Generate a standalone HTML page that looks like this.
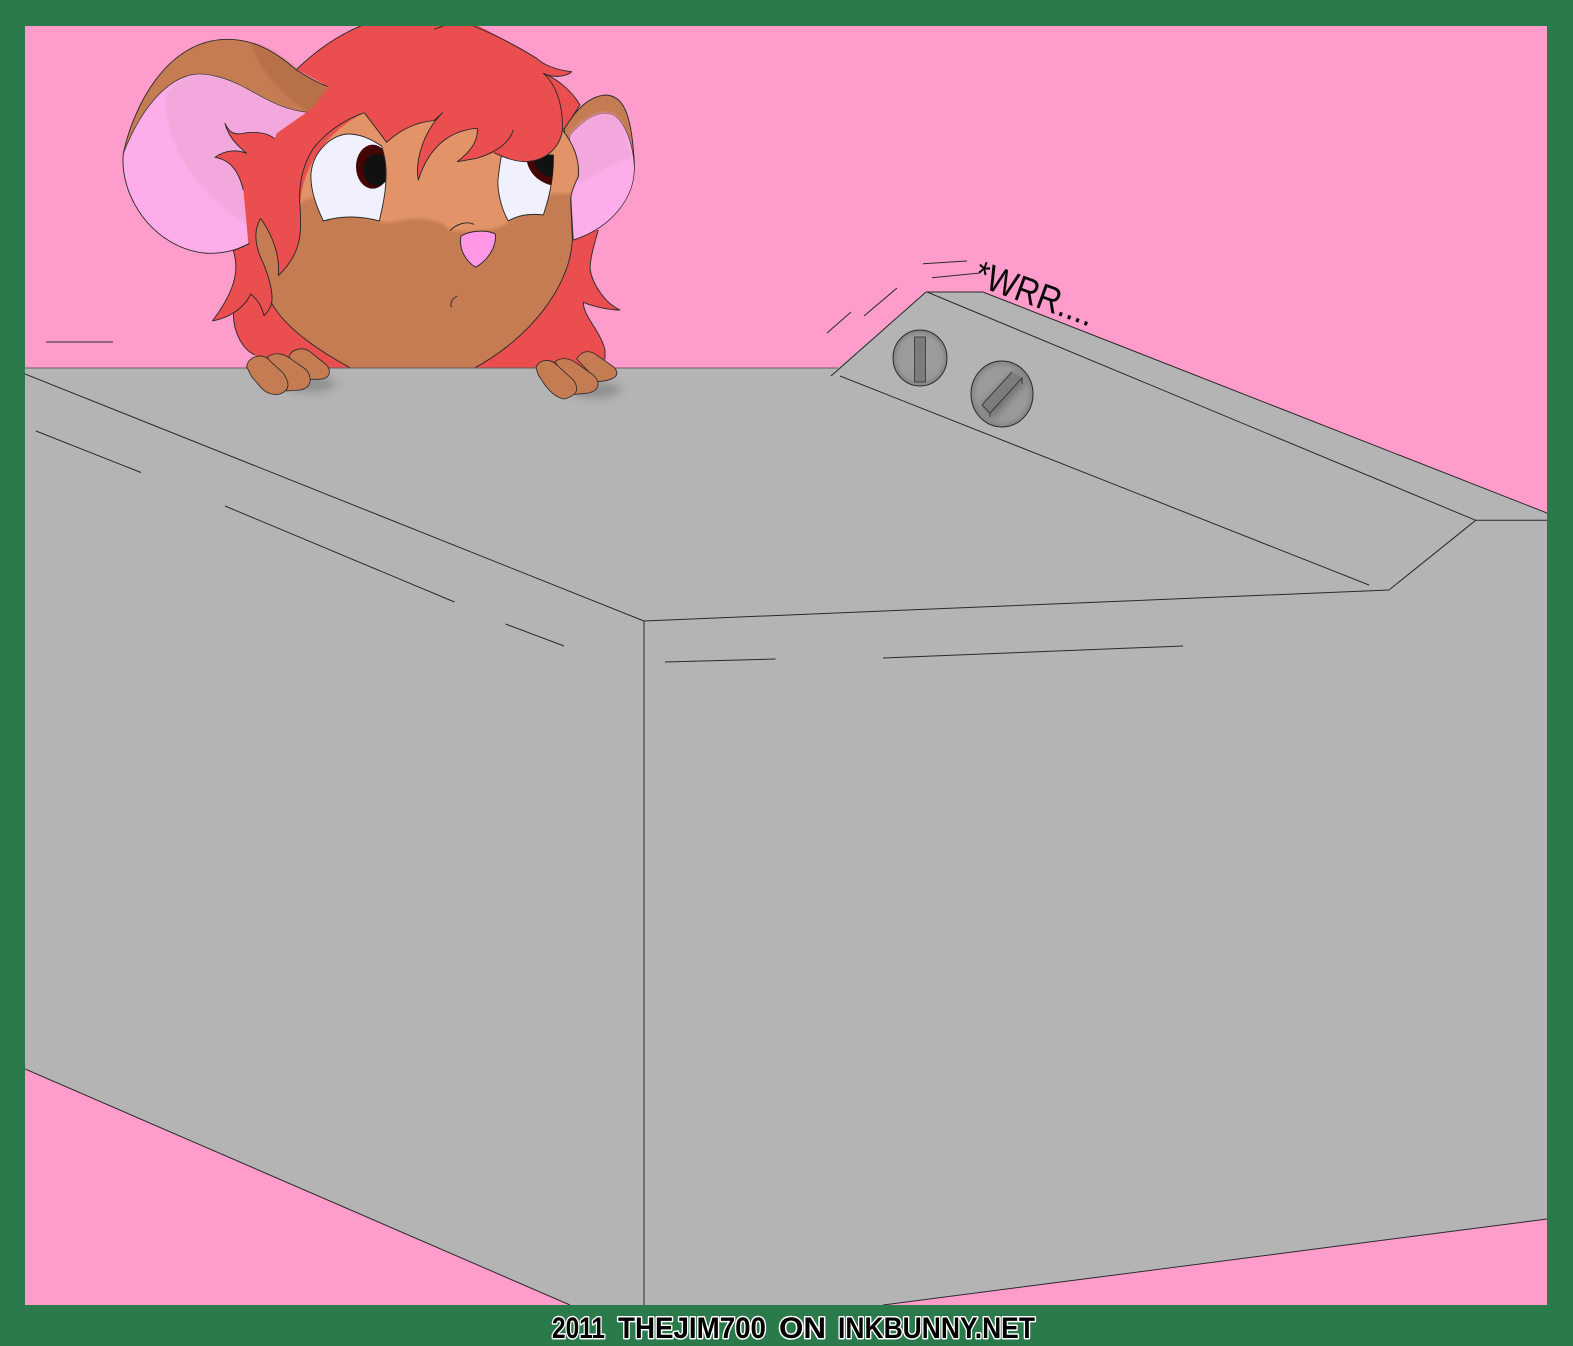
<!DOCTYPE html>
<html><head><meta charset="utf-8"><style>
html,body{margin:0;padding:0;background:#2b7a4b;width:1573px;height:1346px;overflow:hidden}
svg{display:block;position:absolute;left:0;top:0}
</style></head><body>
<svg width="1573" height="1346" viewBox="0 0 1573 1346" xmlns="http://www.w3.org/2000/svg">
<defs>
<filter id="b1" x="-20%" y="-20%" width="140%" height="140%"><feGaussianBlur stdDeviation="5"/></filter>
<filter id="b3" x="-50%" y="-50%" width="200%" height="200%"><feGaussianBlur stdDeviation="4.500"/></filter>
<radialGradient id="k1"><stop offset="0" stop-color="#a0a0a0"/><stop offset=".8" stop-color="#9a9a9a"/><stop offset="1" stop-color="#828282"/></radialGradient>
<clipPath id="pg"><rect x="25" y="26" width="1522" height="1279"/></clipPath>
<clipPath id="cz"><rect x="0" y="18" width="2700" height="1025"/></clipPath>
<clipPath id="e1"><path d="M640 603C620 560 600 510 603 460C610 390 670 340 720 342C770 345 800 370 815 378C825 410 830 440 828 470C828 520 815 570 808 603C760 590 700 585 640 603Z"/></clipPath>
<clipPath id="e2"><path d="M1195 603C1170 560 1160 500 1165 470C1168 445 1170 425 1175 405L1330 405C1332 480 1315 540 1300 585C1260 580 1225 585 1195 603Z"/></clipPath>
<clipPath id="f1"><path d="M452 595C425 640 440 690 460 730C480 780 490 820 485 850C530 930 640 1000 720 1043L1095 1043C1250 960 1387 800 1387 650L1382 540C1382 520 1395 490 1405 470C1410 420 1390 370 1357 330L1000 250L763 278C650 335 575 440 570 560Z"/></clipPath>
</defs>
<rect width="1573" height="1346" fill="#2b7a4b"/>
<g clip-path="url(#pg)">
<rect x="25" y="26" width="1522" height="1279" fill="#fe9dcb"/>

<g transform="translate(110 20) scale(.33333)" clip-path="url(#cz)" stroke-linejoin="round">
  <!-- back hair left -->
  <path d="M370 692C385 740 385 800 307 903C330 898 350 892 370 880C370 940 400 990 435 1005L480 1050L720 1050L600 500L435 670Z" fill="#ea4e4f"/>
  <path d="M370 692C385 740 385 800 307 903M370 880C370 940 400 990 435 1005" fill="none" stroke="#2a2a2a" stroke-width="2.800"/>
  <!-- back hair right -->
  <path d="M1465 630C1450 680 1440 720 1440 745C1445 790 1485 850 1530 870C1500 870 1450 860 1420 847C1420 890 1470 930 1485 990L1485 1050L1095 1050L1350 620Z" fill="#ea4e4f"/>
  <path d="M1465 630C1450 680 1440 720 1440 745C1445 790 1485 850 1530 870C1500 870 1450 860 1420 847C1420 890 1470 930 1485 990L1485 1018" fill="none" stroke="#2a2a2a" stroke-width="2.800"/>

  <!-- left ear -->
  <path d="M40 400C30 500 90 620 200 675C240 695 280 700 300 700C340 700 385 690 420 670L600 277C510 270 450 225 390 195C340 170 290 160 260 162C170 170 90 270 40 400Z" fill="#fdaeea" stroke="#2a2a2a" stroke-width="2.800"/>
  <path d="M165 225C160 330 220 500 415 615L500 350L600 277C510 270 450 225 390 195C340 170 290 160 260 162C225 165 190 195 165 225Z" fill="#f2a8dc" filter="url(#b1)"/>
  <path d="M40 400C70 260 170 60 350 58C450 58 510 110 560 150C590 170 620 188 655 200L650 240L600 277C510 270 450 225 390 195C340 170 290 160 260 162C170 170 90 270 40 400Z" fill="#c67c53"/>
  <path d="M425 72C440 130 500 220 600 277L650 240L655 200C620 188 590 170 560 150C520 115 480 85 425 72Z" fill="#b8704a" filter="url(#b1)"/>
  <path d="M40 400C70 260 170 60 350 58C450 58 510 110 560 150C590 170 620 188 655 200" fill="none" stroke="#2a2a2a" stroke-width="2.800"/>
  <path d="M40 400C90 270 170 170 260 162C290 160 340 170 390 195C450 225 510 270 595 277" fill="none" stroke="#444" stroke-width="2"/>

  <!-- right ear -->
  <path d="M1362 328C1390 280 1430 230 1485 225C1540 225 1565 280 1573 430C1575 530 1510 620 1390 660L1375 400Z" fill="#c67c53" stroke="#2a2a2a" stroke-width="2.800"/>
  <path d="M1380 345C1430 290 1470 270 1510 285C1550 310 1570 380 1573 440C1575 530 1510 620 1390 660L1375 400Z" fill="#fdaeea" stroke="#2a2a2a" stroke-width="2"/>
  <path d="M1380 345C1430 290 1470 270 1510 285C1540 305 1556 360 1562 415C1510 430 1450 470 1405 490Z" fill="#f2a8dc" filter="url(#b1)"/>
  <path d="M1300 160C1350 180 1390 220 1410 255L1362 328L1290 300Z" fill="#ea4e4f" stroke="#2a2a2a" stroke-width="2.800"/>

  <!-- side hair over left ear -->
  <path d="M345 310C360 345 380 345 410 338C450 335 480 340 497 360L600 277L800 260L760 780L505 900L462 887L422 822L400 700L415 670L405 560L400 510C385 450 360 420 315 412C345 390 380 388 410 400C380 375 355 350 345 310Z" fill="#ea4e4f"/>
  <path d="M400 510C385 450 360 420 315 412C345 390 380 388 410 400C380 375 355 350 345 310C360 345 380 345 410 338C450 335 480 340 497 360" fill="none" stroke="#2a2a2a" stroke-width="2.800"/>
  <path d="M420 670L370 692" fill="none" stroke="#2a2a2a" stroke-width="2.800"/>
  <path d="M307 903C350 895 400 870 422 822C445 840 455 860 462 887C480 870 490 850 485 820L440 700L400 700L370 880Z" fill="#ea4e4f"/>
  <path d="M307 903C350 895 400 870 422 822C445 840 455 860 462 887C480 870 490 850 485 820" fill="none" stroke="#2a2a2a" stroke-width="2.800"/>

  <!-- face -->
  <path d="M452 595C425 640 440 690 460 730C480 780 490 820 485 850C530 930 640 1000 720 1043L1095 1043C1250 960 1387 800 1387 650L1382 540C1382 520 1395 490 1405 470C1410 420 1390 370 1357 330L1000 250L763 278C650 335 575 440 570 560Z" fill="#c67c53"/>
  <g clip-path="url(#f1)">
    <path d="M560 560C590 530 610 520 640 560L810 605C830 615 870 595 930 595C980 600 1000 610 1020 630C1100 640 1160 630 1190 610C1240 570 1290 530 1330 520L1400 520L1420 250L560 250Z" fill="#e29467" filter="url(#b1)"/>
    <path d="M500 900C560 960 640 1010 720 1043L690 1050C600 1020 530 960 490 880Z" fill="#b8704a" opacity=".6" filter="url(#b1)"/>
  </g>
  <path d="M452 595C425 640 440 690 460 730C480 780 490 820 485 850C530 930 640 1000 720 1043" fill="none" stroke="#2a2a2a" stroke-width="2.800"/>
  <path d="M1095 1043C1250 960 1387 800 1387 650L1382 540C1382 520 1395 490 1405 470C1410 420 1390 370 1357 330" fill="none" stroke="#2a2a2a" stroke-width="2.800"/>

  <!-- red tuft beside face -->
  <path d="M763 278C700 300 650 335 610 385C575 440 565 500 570 560C575 640 575 700 505 767C510 710 490 650 452 595L420 560L500 340L700 200Z" fill="#ea4e4f"/>
  <path d="M763 278C700 300 650 335 610 385C575 440 565 500 570 560C575 640 575 700 505 767C510 710 490 650 452 595" fill="none" stroke="#2a2a2a" stroke-width="2.800"/>

  <!-- eyes -->
  <path d="M640 603C620 560 600 510 603 460C610 390 670 340 720 342C770 345 800 370 815 378C825 410 830 440 828 470C828 520 815 570 808 603C760 590 700 585 640 603Z" fill="#f1f0fe"/>
  <g clip-path="url(#e1)">
    <ellipse cx="788" cy="440" rx="50" ry="66" fill="#450505"/>
    <ellipse cx="800" cy="449" rx="40" ry="48" fill="#111"/>
  </g>
  <path d="M640 603C620 560 600 510 603 460C610 390 670 340 720 342C770 345 800 370 815 378C825 410 830 440 828 470C828 520 815 570 808 603C760 590 700 585 640 603Z" fill="none" stroke="#2a2a2a" stroke-width="2.800"/>
  <path d="M1195 603C1170 560 1160 500 1165 470C1168 445 1170 425 1175 405L1330 405C1332 480 1315 540 1300 585C1260 580 1225 585 1195 603Z" fill="#f1f0fe" stroke="#2a2a2a" stroke-width="2.800"/>
  <g clip-path="url(#e2)">
    <path d="M1250 420C1255 460 1290 490 1330 497L1335 400L1250 400Z" fill="#450505"/>
    <path d="M1272 420C1277 450 1300 470 1330 472L1335 400L1280 400Z" fill="#111"/>
  </g>

  <!-- top hair -->
  <path d="M560 148C620 90 690 40 772 10L1090 10C1170 50 1240 90 1280 115C1300 135 1340 150 1385 155C1370 170 1330 175 1300 160C1340 195 1360 260 1357 330C1350 385 1305 425 1240 425C1205 422 1175 410 1152 398C1120 412 1080 420 1042 425C1080 395 1105 365 1102 325C1030 330 960 370 925 480C915 430 935 340 998 278L972 302C920 305 870 330 830 367L763 278L600 277L655 200Z" fill="#ea4e4f"/>
  <path d="M560 148C620 90 690 40 772 10M1090 18C1170 50 1240 90 1280 115C1300 135 1340 150 1385 155C1370 170 1330 175 1300 160C1340 195 1360 260 1357 330C1350 385 1305 425 1240 425C1205 422 1175 410 1152 398" fill="none" stroke="#2a2a2a" stroke-width="2.800"/>
  <path d="M972 28L1000 18" fill="none" stroke="#2a2a2a" stroke-width="2.800"/>
  <path d="M1210 330C1195 375 1150 400 1100 415L1042 425C1080 395 1105 365 1102 325C1030 330 960 370 925 480C915 430 935 340 998 278C985 290 978 296 972 302C920 305 870 330 830 367L763 278" fill="none" stroke="#2a2a2a" stroke-width="2.800"/>

  <!-- nose etc -->
  <path d="M1053 648C1080 632 1130 628 1156 642C1160 680 1135 720 1097 742C1070 725 1045 690 1053 648Z" fill="#ff96e6" stroke="#2a2a2a" stroke-width="2.800"/>
  <path d="M1020 632C1040 612 1070 602 1092 613" fill="none" stroke="#2a2a2a" stroke-width="2.800"/>
  <path d="M1042 828C1025 835 1020 850 1024 862" fill="none" stroke="#2a2a2a" stroke-width="2.800"/>
</g>

<!-- machine -->
<path d="M25 368L838 368L926 292L983 292L1547 513L1547 1219L883 1305L570 1305L25 1069Z" fill="#b4b4b4"/>
<g fill="none" stroke="#2a2a2a" stroke-width="1">
  <path d="M25 368L838 368" stroke="#6a5a60"/>
  <path d="M831 376L926 292L983 292L1547 513"/>
  <path d="M25 374L644 621L644 1305"/>
  <path d="M644 621L1389 590L1475.700 520.300L1547 520.300"/>
  <path d="M927 292L1475.700 520.300"/>
  <path d="M840 376L1369 585"/>
  <path d="M25 1069L570 1305"/>
  <path d="M883 1305L1547 1219"/>
  <path d="M36 431L141 472.500M225 506L454.500 602M505.600 624L564 646M665 662L775.500 659M883 658L1183 646M46 342L113 342"/>
  <path d="M827 333L851 312M864 316L897 288M923 263.700L967 261M932 277.700L980 273"/>
</g>

<!-- knobs -->
<ellipse cx="920" cy="358" rx="27" ry="28" fill="url(#k1)" stroke="#2a2a2a" stroke-width="1"/>
<rect x="914.500" y="337" width="11" height="45" fill="#7c7c7c" stroke="#333" stroke-width=".8"/>
<ellipse cx="1002" cy="394" rx="31" ry="33" fill="url(#k1)" stroke="#2a2a2a" stroke-width="1"/>
<path d="M981 406L1014 372L1026 382L992 420Z" fill="#5e5e5e" filter="url(#b3)" opacity=".7"/>
<path d="M982 405L1012 372L1022 378L990 413Z" fill="#7c7c7c"/>
<path d="M982 405L1012 372M990 413L1022 378L1022 384M982 405L990 413L990 417" fill="none" stroke="#2a2a2a" stroke-width=".8"/>

<text x="972" y="284" transform="rotate(20 972 284)" textLength="125" lengthAdjust="spacingAndGlyphs" font-family="'Liberation Sans',Arial,sans-serif" font-size="37" fill="#0a0a0a">*WRR....</text>

<!-- hand shadows -->
<ellipse cx="310" cy="384" rx="26" ry="8" fill="#777" opacity=".6" filter="url(#b3)"/>
<ellipse cx="595" cy="390" rx="26" ry="8" fill="#777" opacity=".6" filter="url(#b3)"/>

<g transform="translate(110 20) scale(.33333)" fill="#c67c53" stroke="#2a2a2a" stroke-width="2.500" stroke-linejoin="round">
  <path d="M537 1010C545 985 580 980 600 995L650 1035C665 1055 660 1075 630 1078L590 1078Z"/>
  <path d="M472 1012C490 995 520 1000 540 1015L590 1050C610 1080 600 1105 570 1110L530 1113Z"/>
  <path d="M410 1040C415 1010 450 1000 472 1015L520 1060C540 1090 540 1110 510 1122C490 1127 470 1120 455 1105L425 1070Z"/>
  <path d="M1400 1017C1415 990 1440 990 1460 1005L1510 1040C1535 1065 1515 1080 1465 1085Z"/>
  <path d="M1335 1025C1355 1010 1380 1015 1400 1030L1450 1065C1475 1090 1465 1115 1430 1120L1395 1123Z"/>
  <path d="M1278 1043C1285 1020 1315 1015 1335 1030L1390 1080C1410 1110 1400 1125 1365 1137C1340 1135 1320 1115 1305 1095L1285 1065Z"/>
</g>
</g>

<!-- footer -->
<g font-family="'Liberation Sans',Arial,sans-serif" font-weight="bold" font-size="30" fill="#000" stroke="#fff" stroke-width="3" paint-order="stroke" stroke-linejoin="round">
  <text x="552" y="1338" textLength="53" lengthAdjust="spacingAndGlyphs">2011</text>
  <text x="618" y="1338" textLength="148" lengthAdjust="spacingAndGlyphs">THEJIM700</text>
  <text x="779" y="1338" textLength="47" lengthAdjust="spacingAndGlyphs">ON</text>
  <text x="838" y="1338" textLength="197" lengthAdjust="spacingAndGlyphs">INKBUNNY.NET</text>
</g>
</svg>
</body></html>
